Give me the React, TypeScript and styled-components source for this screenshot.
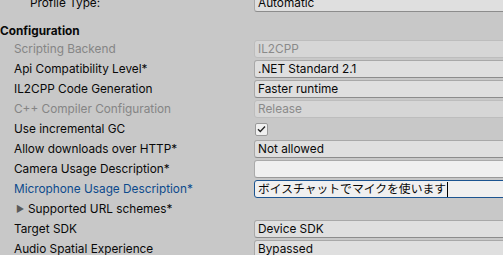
import React from "react";
import styled, { createGlobalStyle } from "styled-components";

const GlobalStyle = createGlobalStyle`
  html, body {
    margin: 0;
    padding: 0;
    background: #c8c8c8;
    overflow: hidden;
  }
  body {
    font-family: Inter, "Noto Sans CJK JP", sans-serif;
    font-size: 11.8px;
    color: #090909;
  }
`;

const Inspector = styled.div`
  width: 520px;
  margin-top: -7px;
  display: flex;
  flex-direction: column;
`;

const Row = styled.div`
  height: 20px;
  display: grid;
  grid-template-columns: 254px 1fr;
  align-items: center;
`;

const Label = styled.div<{ $tone?: "normal" | "disabled" | "focus"; $indent?: number }>`
  padding-left: ${(p) => p.$indent ?? 14}px;
  line-height: 16px;
  white-space: nowrap;
  display: flex;
  align-items: center;
  color: ${(p) =>
    p.$tone === "disabled" ? "#858585" : p.$tone === "focus" ? "#0c4a8c" : "#090909"};
`;

const Header = styled.div`
  height: 26px;
  display: flex;
  align-items: flex-end;
  font-weight: 700;
  line-height: 16px;
`;

const Field = styled.div<{ $kind?: "popup" | "disabled" | "text" | "focus" }>`
  height: 18px;
  box-sizing: border-box;
  border-radius: 3px;
  padding: 0 3px;
  display: flex;
  align-items: center;
  white-space: nowrap;
  line-height: 16px;
  ${(p) => {
    switch (p.$kind) {
      case "disabled":
        return `
          background: #d6d6d6;
          border: 1px solid #bdbdbd;
          color: #8a8a8a;
        `;
      case "text":
        return `
          background: #f0f0f0;
          border: 1px solid #aaaaaa;
          border-bottom-color: #9a9a9a;
        `;
      case "focus":
        return `
          background: #f0f0f0;
          border: 1px solid #1c5490;
        `;
      default:
        return `
          background: #dfdfdf;
          border: 1px solid #a8a8a8;
          border-bottom-color: #8c8c8c;
        `;
    }
  }}
`;

const Caret = styled.span`
  display: inline-block;
  width: 1px;
  height: 15px;
  background: #000;
  margin-left: 1px;
`;

const Checkbox = styled.div`
  width: 13px;
  height: 13px;
  box-sizing: border-box;
  margin-left: 1px;
  border-radius: 2px;
  background: #f0f0f0;
  border: 1px solid #9a9a9a;
  display: flex;
  align-items: center;
  justify-content: center;
`;

const Foldout = styled.span`
  color: #5a5a5a;
  font-size: 9px;
  width: 12px;
  margin-left: 2px;
`;

const Check = () => (
  <svg width="9" height="8" viewBox="0 0 9 8">
    <path d="M1 4.2 L3.3 6.5 L8 1.5" fill="none" stroke="#222" strokeWidth="1.3" />
  </svg>
);

const App: React.FC = () => {
  return (
    <>
      <GlobalStyle />
      <Inspector>
        <Row>
          <Label $indent={30}>Profile Type:</Label>
          <Field>Automatic</Field>
        </Row>
        <Header>Configuration</Header>
        <Row>
          <Label $tone="disabled">Scripting Backend</Label>
          <Field $kind="disabled">IL2CPP</Field>
        </Row>
        <Row>
          <Label>Api Compatibility Level*</Label>
          <Field>.NET Standard 2.1</Field>
        </Row>
        <Row>
          <Label>IL2CPP Code Generation</Label>
          <Field>Faster runtime</Field>
        </Row>
        <Row>
          <Label $tone="disabled">C++ Compiler Configuration</Label>
          <Field $kind="disabled">Release</Field>
        </Row>
        <Row>
          <Label>Use incremental GC</Label>
          <Checkbox>
            <Check />
          </Checkbox>
        </Row>
        <Row>
          <Label>Allow downloads over HTTP*</Label>
          <Field>Not allowed</Field>
        </Row>
        <Row>
          <Label>Camera Usage Description*</Label>
          <Field $kind="text" />
        </Row>
        <Row>
          <Label $tone="focus">Microphone Usage Description*</Label>
          <Field $kind="focus">
            ボイスチャットでマイクを使います
            <Caret />
          </Field>
        </Row>
        <Row>
          <Label $indent={14}>
            <Foldout>▶</Foldout>Supported URL schemes*
          </Label>
        </Row>
        <Row>
          <Label>Target SDK</Label>
          <Field>Device SDK</Field>
        </Row>
        <Row>
          <Label>Audio Spatial Experience</Label>
          <Field>Bypassed</Field>
        </Row>
      </Inspector>
    </>
  );
};

export default App;
